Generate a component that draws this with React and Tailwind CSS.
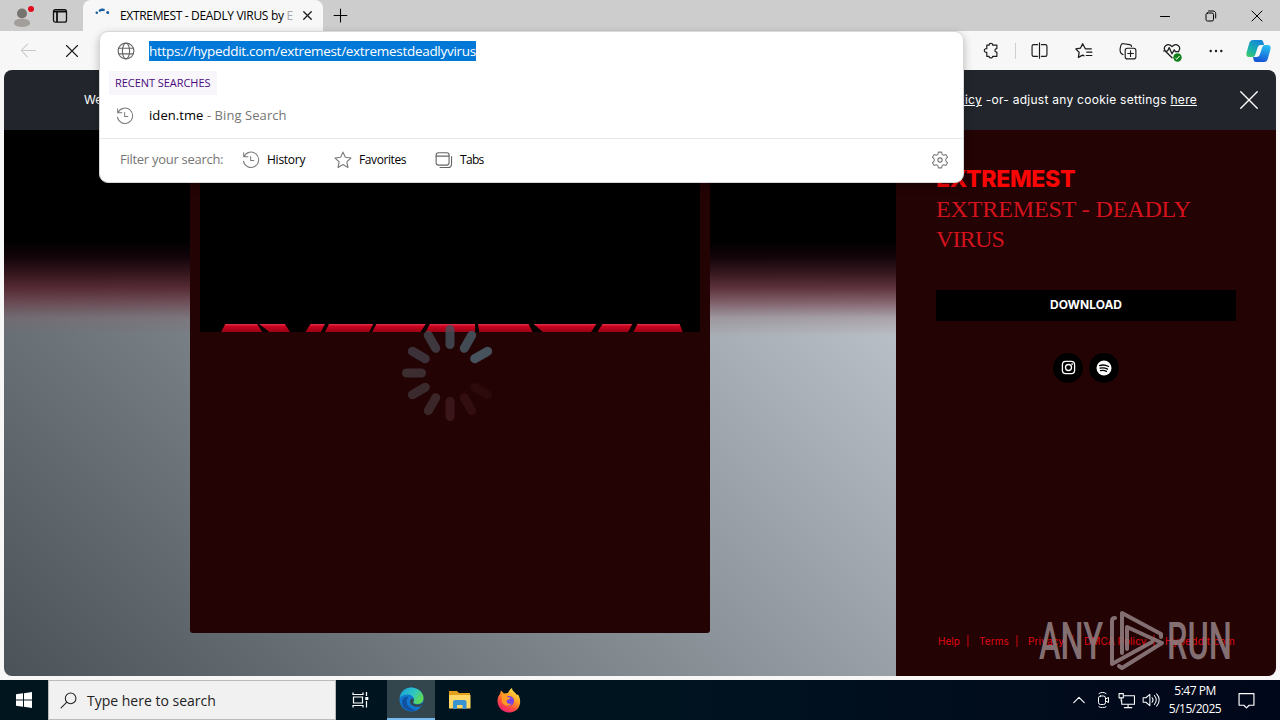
import React from "react";

const ui = "font-['Open_Sans','Noto_Sans',sans-serif]";
const web = "font-[Inter,'Open_Sans',sans-serif]";

// blades of the loading spinner, clockwise from the top
const blades = [
  { color: "#46525c", opacity: 0.8 },
  { color: "#46525c", opacity: 0.9 },
  { color: "#46525c", opacity: 1 },
  { color: "#000000", opacity: 0 },
  { color: "#804050", opacity: 0.1 },
  { color: "#804050", opacity: 0.18 },
  { color: "#805060", opacity: 0.25 },
  { color: "#707078", opacity: 0.32 },
  { color: "#606870", opacity: 0.38 },
  { color: "#606870", opacity: 0.42 },
  { color: "#586470", opacity: 0.48 },
  { color: "#505c66", opacity: 0.6 },
];

const shards = [
  "40,8 44,0 75,0 80,8",
  "77,0 102,0 107,8 87,8",
  "122,8 127,0 141,0 137,8",
  "141,8 145,0 188,0 184,8",
  "187,8 191,0 239,0 234,8",
  "239,8 243,0 287,0 287,8",
  "290,0 339,0 343,8 291,8",
  "344,0 405,0 400,8 353,8",
  "406,8 411,0 440,0 436,8",
  "441,8 445,0 486,0 489,8",
];

function Icon({ size = 16, children, className = "" }) {
  return (
    <svg
      width={size}
      height={size}
      viewBox="0 0 16 16"
      fill="none"
      stroke="currentColor"
      strokeLinecap="round"
      strokeLinejoin="round"
      className={`shrink-0 ${className}`}
    >
      {children}
    </svg>
  );
}

function HistoryIcon() {
  return (
    <Icon size={18} className="text-[#7a7a7a]">
      <path strokeWidth="0.9" d="M1.5 1.5v3.7h3.7M1.8 5A6.8 6.8 0 1 1 1.3 9M7.7 4.8v3.7h2.8" />
    </Icon>
  );
}

function TabStrip() {
  return (
    <div className="flex h-[31px] bg-[#cdcdcd]">
      <div className="flex w-[83px] items-center pl-3">
        <svg width="24" height="30" viewBox="0 0 24 30">
          <circle cx="10" cy="12.5" r="5" fill="#77736f" />
          <path d="M2 23c0-5 3.500-5 8-5s8 0 8 5c-2 4-14 4-16 0z" fill="#a29e9a" />
          <circle cx="19" cy="8" r="3" fill="#e00b1c" />
        </svg>
        <svg width="16" height="16" viewBox="0 0 16 16" fill="none" stroke="#111" strokeWidth="1.300" className="ml-4">
          <rect x="1.500" y="1.700" width="13" height="12.500" rx="2" />
          <path d="M2 3.500h12M5 4v10" strokeWidth="1.800" />
        </svg>
      </div>
      <div className="flex w-60 items-center rounded-t-lg bg-[#f7f7f7] pl-3">
        <svg width="16" height="16" viewBox="0 0 16 16" fill="#1a5fa0">
          <circle cx="1.800" cy="4.800" r="1.300" />
          <path d="M3.500 2.500C5 .3 8.500.1 10 1.200L9.300 3.300C8 2.600 6 2.800 4.600 4z" />
          <circle cx="12.700" cy="4.500" r="1.500" />
        </svg>
        <span className="ml-[9px] w-[175px] overflow-hidden text-[12px] tracking-[-0.33px] whitespace-nowrap text-black">
          EXTREMEST - DEADLY VIRUS by <span className="text-[#aaa]">E</span>
        </span>
        <Icon size={15} className="ml-[5px] text-[#222]">
          <path d="M4 4l8 8M12 4l-8 8" strokeWidth="1.500" />
        </Icon>
      </div>
      <Icon size={17} className="mt-[7px] ml-[9px] text-black">
        <path d="M8 2v12M2 8h12" />
      </Icon>
      <div className="mt-2 mr-[15px] ml-auto flex gap-[30px] text-black">
        <Icon><path d="M3.500 8.500h9" /></Icon>
        <Icon>
          <rect x="3" y="5" width="7.500" height="8" rx="1.500" />
          <path d="M5.500 3H10c1.600 0 2.700 1 2.700 2.700V10" />
        </Icon>
        <Icon><path d="M3 3l10 10M13 3L3 13" /></Icon>
      </div>
    </div>
  );
}

function Toolbar() {
  return (
    <div className="flex h-[39px] items-center bg-[#f7f7f7] pl-5 text-[#1b1b1b]">
      <Icon size={17} className="text-[#c8c8c8]"><path d="M14.500 8H1.500M7 2L1.200 8 7 14" /></Icon>
      <Icon size={16} className="ml-[27px]"><path d="M2.500 2.500l11 11M13.500 2.500l-11 11" strokeWidth="1.100" /></Icon>
      <div className="mr-[9px] ml-auto flex items-center">
        <Icon size={17}>
          <path d="M4.500 3h2.200c-.3-2.400 3.600-2.400 3.300 0H14v3.200c-2.400-.2-2.400 3.600 0 3.400V13.500h-4c.3 2-3.600 2-3.300 0H4.500V9.800C1.400 10 1.400 6 4.500 6.200z" strokeWidth="1.100" />
        </Icon>
        <div className="ml-4 h-4 w-px bg-[#cfcfcf]" />
        <Icon size={17} className="ml-[15px]">
          <path d="M6.200 2.500H2.500C1.500 2.500 1 3 1 4v8c0 1 .5 1.500 1.500 1.500h3.700M9.800 2.500h3.700c1 0 1.500.5 1.500 1.500v8c0 1-.5 1.500-1.500 1.500H9.800M8 .8v14.400" strokeWidth="1.100" />
        </Icon>
        <Icon size={18} className="ml-[27px]">
          <path d="M14.500 6.200H9.300L6.800 1.500 4.800 5.500.8 6.200l2.900 3-.7 4.500 3.800-2 1.200.6M10.500 9h4.500M10 12h5" strokeWidth="1.100" />
        </Icon>
        <Icon size={18} className="ml-[26px]">
          <rect x="5.500" y="5.500" width="9.500" height="9.500" rx="2" />
          <path d="M10.250 7.800v5M7.800 10.250h5M3.600 11.200C1.500 10.500.8 8 1 6l.7-3c.4-1.300 1.200-1.700 2.400-1.500l5.300.8c1.300.2 1.800.8 1.800 1.700" />
        </Icon>
        <span className="relative ml-[26px]">
          <Icon size={18}>
            <path d="M8 14L2 8C-.5 4 4 .2 8 4c4-3.800 8.500 0 6 4M.5 8H4l1.500-3 2.500 5.500 2-3.500 1 1.500h3" strokeWidth="1.100" />
          </Icon>
          <svg width="9" height="9" viewBox="0 0 9 9" className="absolute -right-px -bottom-0.5">
            <circle cx="4.500" cy="4.500" r="4.200" fill="#12801a" />
            <path d="M2.500 5l1.300 1.200L6.500 3" stroke="#fff" fill="none" />
          </svg>
        </span>
        <Icon size={16} className="ml-[27px]">
          <g fill="currentColor" stroke="none">
            <circle cx="2.700" cy="8" r="1.200" />
            <circle cx="8" cy="8" r="1.200" />
            <circle cx="13.300" cy="8" r="1.200" />
          </g>
        </Icon>
        <svg width="25" height="24" viewBox="0 0 25 24" className="ml-[22px]">
          <defs>
            <linearGradient id="cop1" x1="0" y1="1" x2="0.6" y2="0">
              <stop offset="0" stopColor="#48cd5c" />
              <stop offset="0.4" stopColor="#1cb4a8" />
              <stop offset="1" stopColor="#1587d8" />
            </linearGradient>
            <linearGradient id="cop2" x1="0.6" y1="0" x2="0.4" y2="1">
              <stop offset="0" stopColor="#27bff0" />
              <stop offset="1" stopColor="#1552d4" />
            </linearGradient>
          </defs>
          <path d="M7 1h8c2 0 2.500 2 3 5h-3c-2 0-3 1-3.500 3l-2 6c-.5 2-1.500 3-3 3H3c-3 0-3-3-2-6l2-7c.8-3 2-4 4-4z" fill="url(#cop1)" />
          <path d="M18 23h-8c-2 0-2.500-2-3-5h3.500c2 0 3-1 3.500-3l2-6c.5-2 1.500-3 3-3H22c3 0 3 3 2 6l-2 7c-.8 3-2 4-4 4z" fill="url(#cop2)" />
        </svg>
      </div>
    </div>
  );
}

function AddressPopup() {
  return (
    <div className="absolute top-[31px] left-[99px] h-[152px] w-[865px] rounded-[9px] border border-[#d8d8d8] bg-white shadow-[0_3px_8px_rgba(0,0,0,0.25)]">
      <div className="flex h-[38px] items-center pl-[17px]">
        <Icon size={18} className="text-[#666]">
          <circle cx="8" cy="8" r="7" />
          <ellipse cx="8" cy="8" rx="3.200" ry="7" />
          <path d="M1.500 5.500h13M1.500 10.500h13" />
        </Icon>
        <span className="ml-[14px] h-5 w-[327px] bg-[#0078d7] text-[13.5px] leading-5 tracking-[-0.3px] whitespace-nowrap text-white">
          https://hypeddit.com/extremest/extremestdeadlyvirus
        </span>
      </div>
      <div className="mt-px ml-[9px] flex h-6 w-[108px] items-center bg-[#f8f6fa] pl-1.5 text-[11px] tracking-[-0.05px] whitespace-nowrap text-[#4b0b80]">
        RECENT SEARCHES
      </div>
      <div className="flex h-[43px] items-center pb-0.5 pl-4">
        <HistoryIcon />
        <span className="ml-[15px] text-[13px] tracking-[0.07px] whitespace-nowrap text-[#767676]">
          <span className="text-black">iden.tme</span> - Bing Search
        </span>
      </div>
      <div className="flex h-[43px] items-center border-t border-[#e8e8e8] pl-5 text-[12px] tracking-[-0.25px] whitespace-nowrap text-black">
        <span className="w-[122px] text-[13px] tracking-[-0.28px] text-[#767676]">Filter your search:</span>
        <HistoryIcon />
        <span className="ml-[7px] w-[67px]">History</span>
        <Icon size={18} className="text-[#7a7a7a]">
          <path d="M8 1l2.100 4.600 5 .6-3.700 3.400 1 5L8 12.100l-4.400 2.500 1-5L.9 6.200l5-.6z" />
        </Icon>
        <span className="ml-[7px] w-[76px] tracking-[-0.4px]">Favorites</span>
        <Icon size={18} className="text-[#666]">
          <rect x="1" y="1.500" width="11.500" height="11" rx="2" />
          <path d="M1 4.500h11.500M4.500 14.700h7c2 0 3.200-1.300 3.200-3.200V5" />
        </Icon>
        <span className="ml-[7px] tracking-[-0.7px]">Tabs</span>
        <Icon size={18} className="mr-[14px] ml-auto text-[#777]">
          <path d="M6.600 1h2.800l.5 2 1.300.8 2-.6 1.500 2.400L13.200 7v2l1.500 1.400-1.500 2.400-2-.6-1.300.8-.5 2H6.600l-.5-2-1.300-.8-2 .6-1.500-2.400L2.800 9V7L1.300 5.600l1.500-2.400 2 .6L6.100 3z" strokeWidth="0.9" />
          <circle cx="8" cy="8" r="1.900" />
        </Icon>
      </div>
    </div>
  );
}

function Spinner() {
  return (
    <svg width="100" height="100" viewBox="-50 -50 100 100" className="absolute top-[193px] left-[210px]">
      {blades.map((blade, i) => (
        <rect
          key={i}
          x="-4.500"
          y="-48"
          width="9"
          height="24"
          rx="4.500"
          fill={blade.color}
          opacity={blade.opacity}
          transform={`rotate(${i * 30})`}
        />
      ))}
    </svg>
  );
}

function Artwork() {
  return (
    <div className="relative flex w-[892px] justify-center overflow-hidden bg-linear-45 from-[#4b5358] to-[#cdd2da]">
      <div className="absolute inset-x-0 top-0 h-[206px] bg-[linear-gradient(to_bottom,#000_0,#000_110px,#12040a_127px,rgba(50,18,25,0.97)_143px,rgba(82,32,42,0.88)_158px,rgba(105,55,66,0.65)_173px,rgba(130,95,103,0.3)_188px,transparent_206px)]" />
      <div className="relative h-[503px] w-[520px] rounded-[3px] bg-[#230304] px-2.5">
        <div className="flex h-[202px] items-end bg-black">
          <svg
            width="514"
            height="8"
            viewBox="0 0 500 8"
            preserveAspectRatio="none"
            className="ml-[-20px] shrink-0"
          >
            <defs>
              <linearGradient id="shard" x1="0" y1="0" x2="0" y2="1">
                <stop offset="0" stopColor="#e0344a" />
                <stop offset="0.3" stopColor="#cc0320" />
                <stop offset="1" stopColor="#970313" />
              </linearGradient>
            </defs>
            {shards.map((points) => (
              <polygon key={points} points={points} fill="url(#shard)" />
            ))}
          </svg>
        </div>
        <Spinner />
      </div>
    </div>
  );
}

function Watermark() {
  return (
    <svg
      width="200"
      height="70"
      viewBox="0 0 200 70"
      className="absolute right-[40px] bottom-0 overflow-visible opacity-85"
    >
      <g fill="#948284" fontFamily="Roboto" fontSize="52" fontWeight="500">
        <text x="3" y="53" textLength="64" lengthAdjust="spacingAndGlyphs">ANY</text>
        <text x="131" y="53" textLength="65" lengthAdjust="spacingAndGlyphs">RUN</text>
      </g>
      <path
        d="M86 47V7l39 21v3M91 43V21l35 16-40 25-3-2M79 12c-2 0-3 1-3 3v43l40-22"
        fill="none"
        stroke="#948284"
        strokeWidth="4"
        strokeLinejoin="round"
        strokeLinecap="round"
      />
    </svg>
  );
}

function Sidebar() {
  return (
    <div className={`relative flex w-[380px] flex-col bg-[#230304] px-10 pt-[34px] text-[#f20a14] ${web}`}>
      <h1 className="text-[23px] leading-[30px] font-extrabold tracking-[-0.3px] text-[#fb0505]">EXTREMEST</h1>
      <h2 className="font-['Liberation_Serif',serif] text-[24px] leading-[30px] tracking-[-0.12px] text-[#d3121c]">
        EXTREMEST - DEADLY <span className="tracking-[-0.8px]">VIRUS</span>
      </h2>
      <button className="mt-9 h-[31px] w-[300px] bg-black pb-0.5 text-[12px] font-bold text-white">DOWNLOAD</button>
      <div className="mt-8 flex w-[300px] justify-center gap-1.5">
        <span className="flex size-[30px] items-center justify-center rounded-full bg-black pb-px text-white">
          <Icon size={15}>
            <rect x="1.500" y="1.500" width="13" height="13" rx="3.500" strokeWidth="1.400" />
            <circle cx="8" cy="8" r="3.200" strokeWidth="1.400" />
            <circle cx="11.700" cy="4.300" r="0.4" />
          </Icon>
        </span>
        <span className="flex size-[30px] items-center justify-center rounded-full bg-black pb-px text-black">
          <Icon size={16}>
            <circle cx="8" cy="8" r="7.500" fill="#fff" stroke="none" />
            <path d="M3.500 5.600c3-.9 6.500-.6 9 .9M4 8.200c2.600-.7 5.300-.4 7.500.9M4.500 10.700c2-.5 4.200-.3 6 .7" strokeWidth="1.300" />
          </Icon>
        </span>
      </div>
      <div className="mt-auto mb-[27px] flex pl-0.5 text-[10px] leading-4 whitespace-nowrap text-[#e00812]">
        <span className="w-[28px]">Help</span>
        <span className="w-[13px]">|</span>
        <span className="w-[36px] tracking-[0.1px]">Terms</span>
        <span className="w-[13px]">|</span>
        <span className="w-[43px] tracking-[0.15px]">Privacy</span>
        <span className="w-[13px]">|</span>
        <span className="w-[68px] tracking-[0.1px]">DMCA Policy</span>
        <span className="w-[13px]">|</span>
        <span className="tracking-[0.3px]">Hypeddit.com</span>
      </div>
      <Watermark />
    </div>
  );
}

function CookieBar() {
  return (
    <div className={`flex h-[60px] items-center bg-[#22262c] pl-20 text-[12px] text-white ${web}`}>
      <span>We</span>
      <span className="ml-auto tracking-[0.27px] whitespace-nowrap">
        <u>policy</u> -or- adjust any cookie settings <u>here</u>
      </span>
      <Icon size={22} className="mr-4 ml-[41px]"><path d="M2 2l12 12M14 2L2 14" /></Icon>
    </div>
  );
}

function Taskbar() {
  return (
    <div className="flex h-10 items-center bg-linear-to-r from-[#00151e] via-[#001420] to-[#01071a] text-white">
      <div className="flex w-12 justify-center">
        <svg width="16" height="16" viewBox="0 0 16 16" fill="#fff">
          <path d="M0 2.300L7 1.300v6.300H0zM8 1.200L16 0v7.600H8zM0 8.500h7v6.300l-7-1zM8 8.500h8V16l-8-1.200z" />
        </svg>
      </div>
      <div className="flex h-10 w-72 items-center border border-[#b9b9b9] bg-[#f1f1f1] pl-[11px] text-[#222]">
        <Icon size={17}><path d="M6.200 9.800L1 15" /><circle cx="10" cy="6" r="5" /></Icon>
        <span className="ml-2.5 text-[14px] whitespace-nowrap">Type here to search</span>
      </div>
      <div className="flex w-[51px] justify-center pr-[3px]">
        <svg width="17" height="16" viewBox="0 0 17 16" fill="none" stroke="#fff" strokeWidth="1.200">
          <path d="M1 .5V2.500h10V.5M1 15.500v-2h10v2M1.500 5h9v6h-9zM14.500 0v4M14.500 9v6.500" />
          <path d="M13.300 6.500h3" strokeWidth="3" />
        </svg>
      </div>
      <div className="flex h-10 w-12 items-center justify-center border-b-2 border-[#78b9ee] bg-[#33464e]">
        <svg width="25" height="25" viewBox="0 0 25 25">
          <defs>
            <linearGradient id="edgeTop" x1="0" y1="0" x2="1" y2="0.500">
              <stop offset="0" stopColor="#169bd8" />
              <stop offset="0.6" stopColor="#2fc6c4" />
              <stop offset="1" stopColor="#5bd957" />
            </linearGradient>
          </defs>
          <circle cx="12.500" cy="12.500" r="12" fill="#1278cf" />
          <path d="M.7 11C2 3 8-.2 14 .7c6 .7 10.500 5 10.500 10.300 0 4-3 6-6.500 6-3 0-4.500-1-3.500-2.500C16.500 11 13 7.500 9 7.500 5 7.500 2 9 .7 11z" fill="url(#edgeTop)" />
          <path d="M9.500 10C5 14 9 22 17 23c-6 3-14-1-14-8 0-3 3-6 6.500-5z" fill="#10529f" />
          <path d="M14.500 14.500c-1 2 1 3.500 5 3 2-.2 3-.8 4.500-1.700-.5 1.500-1 2.500-2 3.400-5 1.500-10.500 0-11-4.200 0-2 1-3.500 2.500-3.500 2 .3 1.500 2 1 3z" fill="#33464e" />
        </svg>
      </div>
      <div className="flex w-[50px] justify-center">
        <svg width="22" height="20" viewBox="0 0 22 20">
          <path d="M0 1h8l2 2h11v3H0z" fill="#e4a11b" />
          <path d="M0 5h21.500v13.500H0z" fill="#ffd867" />
          <path d="M4 19v-7c0-1 .7-2 2-2h9.500c1.300 0 2 1 2 2v7h-4v-4H8v4z" fill="#3a93d1" />
        </svg>
      </div>
      <div className="flex w-12 justify-center">
        <svg width="24" height="25" viewBox="0 0 24 25">
          <defs>
            <linearGradient id="fox" x1="0.8" y1="0" x2="0.2" y2="1">
              <stop offset="0" stopColor="#fff44a" />
              <stop offset="0.4" stopColor="#ff9b26" />
              <stop offset="0.7" stopColor="#ff4842" />
              <stop offset="1" stopColor="#e8197c" />
            </linearGradient>
          </defs>
          <path d="M3 6l1-3.500L7 5.500l4-.5c1-2.500 2.500-4 4-5 0 3 3 4 5 7l1-.5c5 8 1 17.500-8.500 18C4 24.800-2 16 1.500 8z" fill="url(#fox)" />
          <circle cx="12" cy="13" r="5" fill="#7542e5" />
          <path d="M4.500 7c3-1 5 0 6 2l3 .7c0 1.800-3 1.800-4 3 0 2.500 2.500 3.800 5 2.800-1.500 3.500-8 3-9.500-1.500z" fill="#ff9a24" />
        </svg>
      </div>
      <div className="ml-auto flex items-center">
        <Icon size={14}><path d="M2 11l6-6 6 6" strokeWidth="1.300" /></Icon>
        <Icon size={16} className="ml-[9px]">
          <rect x="3.500" y="4" width="7" height="8.500" rx="2" />
          <path d="M10.500 7l3-1.500v5l-3-1.500M4 1.500C6 0 9 0 11 1.500M4 14.800c2 1.300 5 1.300 7 0" />
        </Icon>
        <Icon size={17} className="ml-[7px]">
          <path d="M6 3.500h9.500v8H3.500V8M9.500 11.500v3M6 14.700h7M1 1.500h4v4H1zM3 5.500v3" />
        </Icon>
        <Icon size={18} className="ml-[7px]">
          <path d="M1 6v4h2.500L7 13V3L3.500 6zM9 6c1 1.200 1 2.800 0 4M11 4c2 2.400 2 5.600 0 8M13 2.500c3 3.200 3 7.800 0 11" strokeWidth="0.9" />
        </Icon>
        <div className="ml-[5px] w-[60px] text-center text-[12px] leading-[18px] tracking-[-0.5px] whitespace-nowrap">
          <div>5:47 PM</div>
          <div>5/15/2025</div>
        </div>
        <Icon size={17} className="mr-[25px] ml-[13px]">
          <path d="M1 1.500h14v11h-4.500L8 15l-2.500-2.500H1z" strokeWidth="1.100" />
        </Icon>
      </div>
    </div>
  );
}

export default function App() {
  return (
    <div className={`relative h-[720px] w-[1280px] overflow-hidden bg-[#f7f7f7] ${ui}`}>
      <TabStrip />
      <Toolbar />
      <div className="mx-1 mb-1 flex h-[606px] flex-col overflow-hidden rounded-lg">
        <CookieBar />
        <div className="flex flex-1">
          <Artwork />
          <Sidebar />
        </div>
      </div>
      <Taskbar />
      <AddressPopup />
    </div>
  );
}
